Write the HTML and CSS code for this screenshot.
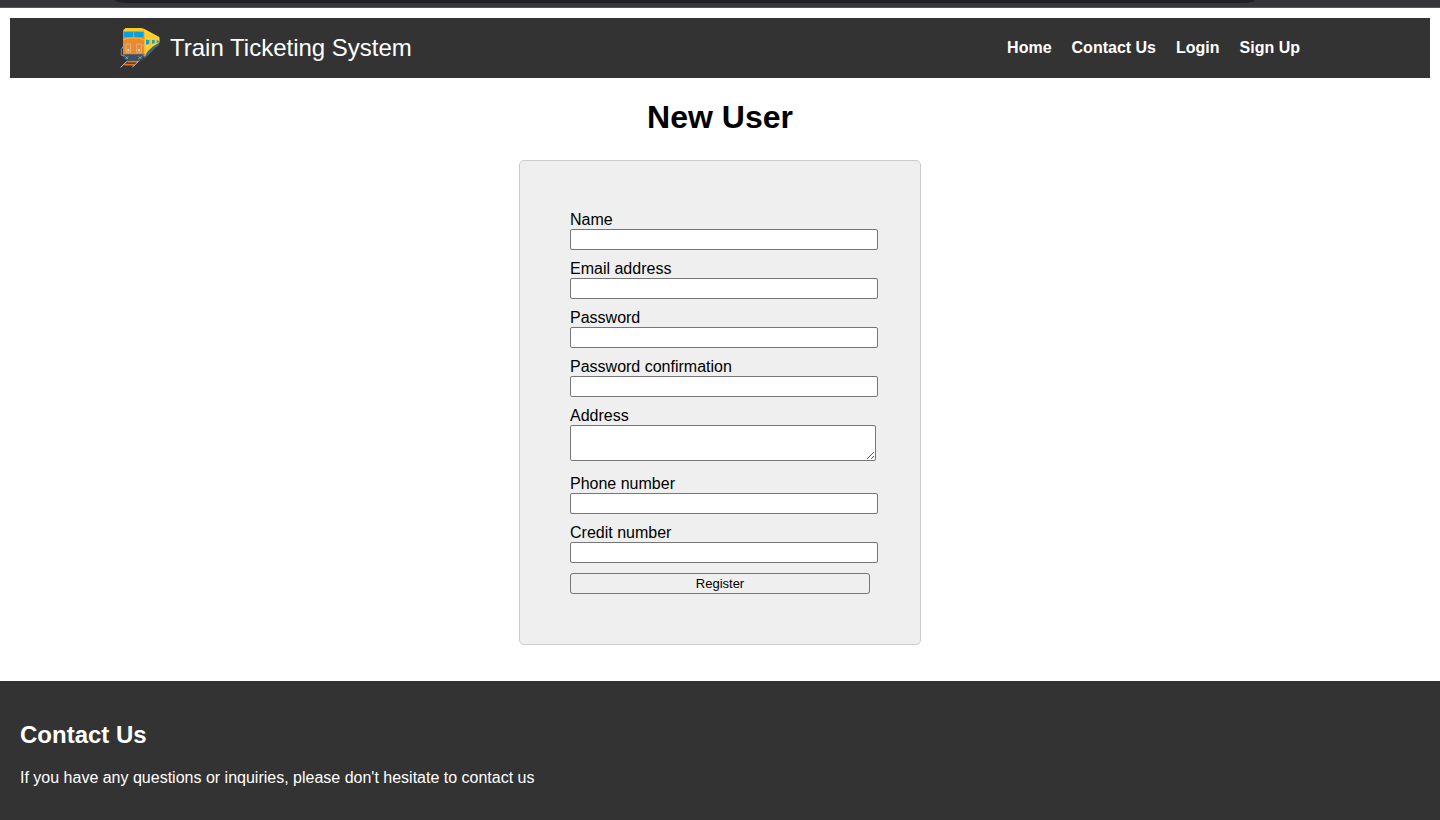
FILE: index.html
```
<!DOCTYPE html>
<html lang="en">
<head>
  <meta charset="utf-8">
  <title>Train Ticketing System</title>
  <link rel="stylesheet" href="styles.css">
</head>
<body>
  <div class="window-bar"><div class="window-bar-field"></div></div>

  <header class="header">
    <a class="brand" href="#">
      <svg class="brand-logo" viewBox="0 0 120 120" aria-hidden="true">
        <path d="M62 0 L72 2 L118 27 Q120 37 118 45 L98 57 L76 83 L68 88 V5Z" fill="#ffd02e"/>
        <path d="M72 86 L84 69 L98 56 L118 44 V50 L104 62 L88 79 L74 92Z" fill="#446378"/>
        <path d="M78 35 L88 36 V48 L78 50Z M96 36 L104 36 V46 L96 47Z M110 37 L117 38 V43 L110 45Z" fill="#08a5dc"/>
        <path d="M92 33 V56 M107 34 V48" stroke="#e6ad24" stroke-width="2"/>
        <path d="M17 0 H64 Q73 5 73 14 V87 H9 V12 Q9 5 17 0Z" fill="#ee8a26"/>
        <path d="M17 0 H64 Q70 3 72 10 H9 Q11 4 17 0Z" fill="#ffc928"/>
        <path d="M12 12 L39 11 V27 H12Z M43 11 L70 12 V27 H43Z" fill="#08a0df"/>
        <path d="M10 35 Q40 25 72 35" fill="none" stroke="#ffb52f" stroke-width="3"/>
        <path d="M9 79 H74 L69 94 Q60 98 41 98 Q20 98 12 93Z" fill="#36536a"/>
        <path d="M18 48 H32 V73 H18Z M50 48 H64 V73 H50Z" fill="#e68a35" stroke="#dfc3aa" stroke-width="2"/>
        <path d="M22 63 H28 V69 H22Z M54 63 H60 V69 H54Z" fill="#ddd"/>
        <path d="M13 50 L4 64 V82 H14 M69 50 L77 64 V82 H68 M16 85 L24 93 M24 85 L17 93 M55 85 L64 93 M66 85 L55 93" fill="none" stroke="#aebac2" stroke-width="2"/>
        <path d="M22 101 H54 M13 110 H44" stroke="#dd7625" stroke-width="5"/>
        <path d="M22 99 L2 118 M58 97 L37 118" stroke="#c5cdd2" stroke-width="3"/>
      </svg>
      <span>Train Ticketing System</span>
    </a>
    <nav class="nav">
      <a href="#">Home</a>
      <a href="#contact">Contact Us</a>
      <a href="#">Login</a>
      <a href="#">Sign Up</a>
    </nav>
  </header>

  <main class="main">
    <h1 class="title">New User</h1>
    <form class="form">
      <div class="field">
        <label for="name">Name</label>
        <input id="name" type="text">
      </div>
      <div class="field">
        <label for="email">Email address</label>
        <input id="email" type="email">
      </div>
      <div class="field">
        <label for="password">Password</label>
        <input id="password" type="password">
      </div>
      <div class="field">
        <label for="confirmation">Password confirmation</label>
        <input id="confirmation" type="password">
      </div>
      <div class="field field-multiline">
        <label for="address">Address</label>
        <textarea id="address"></textarea>
      </div>
      <div class="field">
        <label for="phone">Phone number</label>
        <input id="phone" type="tel">
      </div>
      <div class="field">
        <label for="credit">Credit number</label>
        <input id="credit" type="text">
      </div>
      <button class="submit" type="submit">Register</button>
    </form>
  </main>

  <footer class="footer" id="contact">
    <h2 class="footer-title">Contact Us</h2>
    <p class="footer-text">If you have any questions or inquiries, please don't hesitate to contact us</p>
  </footer>
</body>
</html>
```

FILE: styles.css
```
* {
  box-sizing: border-box;
}

body {
  margin: 0;
  min-height: 100vh;
  display: flex;
  flex-direction: column;
  font-family: "Liberation Sans", Arial, sans-serif;
  font-size: 16px;
  line-height: 18px;
  color: #000;
  background: #fff;
}

.window-bar {
  height: 8px;
  padding: 0 185px 0 115px;
  background: #35353a;
  border-bottom: 1px solid #56565a;
}

.window-bar-field {
  height: 3px;
  background: #202124;
  border-radius: 0 0 12px 12px / 0 0 3px 3px;
}

.header {
  display: flex;
  align-items: center;
  justify-content: space-between;
  margin: 10px 10px 0;
  padding: 10px 130px 10px 110px;
  background: #333;
}

.brand {
  display: flex;
  align-items: center;
  gap: 10px;
  font-size: 24px;
  line-height: 28px;
  color: #fff;
  text-decoration: none;
}

.brand-logo {
  width: 40px;
  height: 40px;
}

.nav {
  display: flex;
  gap: 20px;
  font-weight: bold;
}

.nav a {
  color: #fff;
  text-decoration: none;
}

.main {
  display: flex;
  flex-direction: column;
  align-items: center;
  padding: 20px 10px 36px;
}

.title {
  margin: 0 0 24px;
  font-size: 32px;
  line-height: 38px;
}

.form {
  display: flex;
  flex-direction: column;
  gap: 10px;
  width: 402px;
  max-width: 100%;
  padding: 50px;
  background: #efefef;
  border: 1px solid #ccc;
  border-radius: 5px;
}

.field {
  display: flex;
  flex-direction: column;
  align-items: flex-start;
}

.field-multiline {
  padding-bottom: 4px;
}

.field input,
.field textarea {
  box-sizing: content-box;
  width: 100%;
  margin: 0;
  font: 13px/15px "Liberation Sans", Arial, sans-serif;
  background: #fff;
  border: 1px solid #767676;
  border-radius: 2px;
}

.field input {
  height: 15px;
  padding: 2px 3px;
}

.field textarea {
  height: 30px;
  padding: 2px;
  resize: both;
}

.submit {
  height: 21px;
  padding: 0 6px;
  font: 13px/15px "Liberation Sans", Arial, sans-serif;
  color: #000;
  background: #efefef;
  border: 1px solid #767676;
  border-radius: 3px;
}

.footer {
  flex-grow: 1;
  padding: 40px 20px 20px;
  color: #fff;
  background: #333;
}

.footer-title {
  margin: 0 0 20px;
  font-size: 24px;
  line-height: 28px;
}

.footer-text {
  margin: 0;
}
```
